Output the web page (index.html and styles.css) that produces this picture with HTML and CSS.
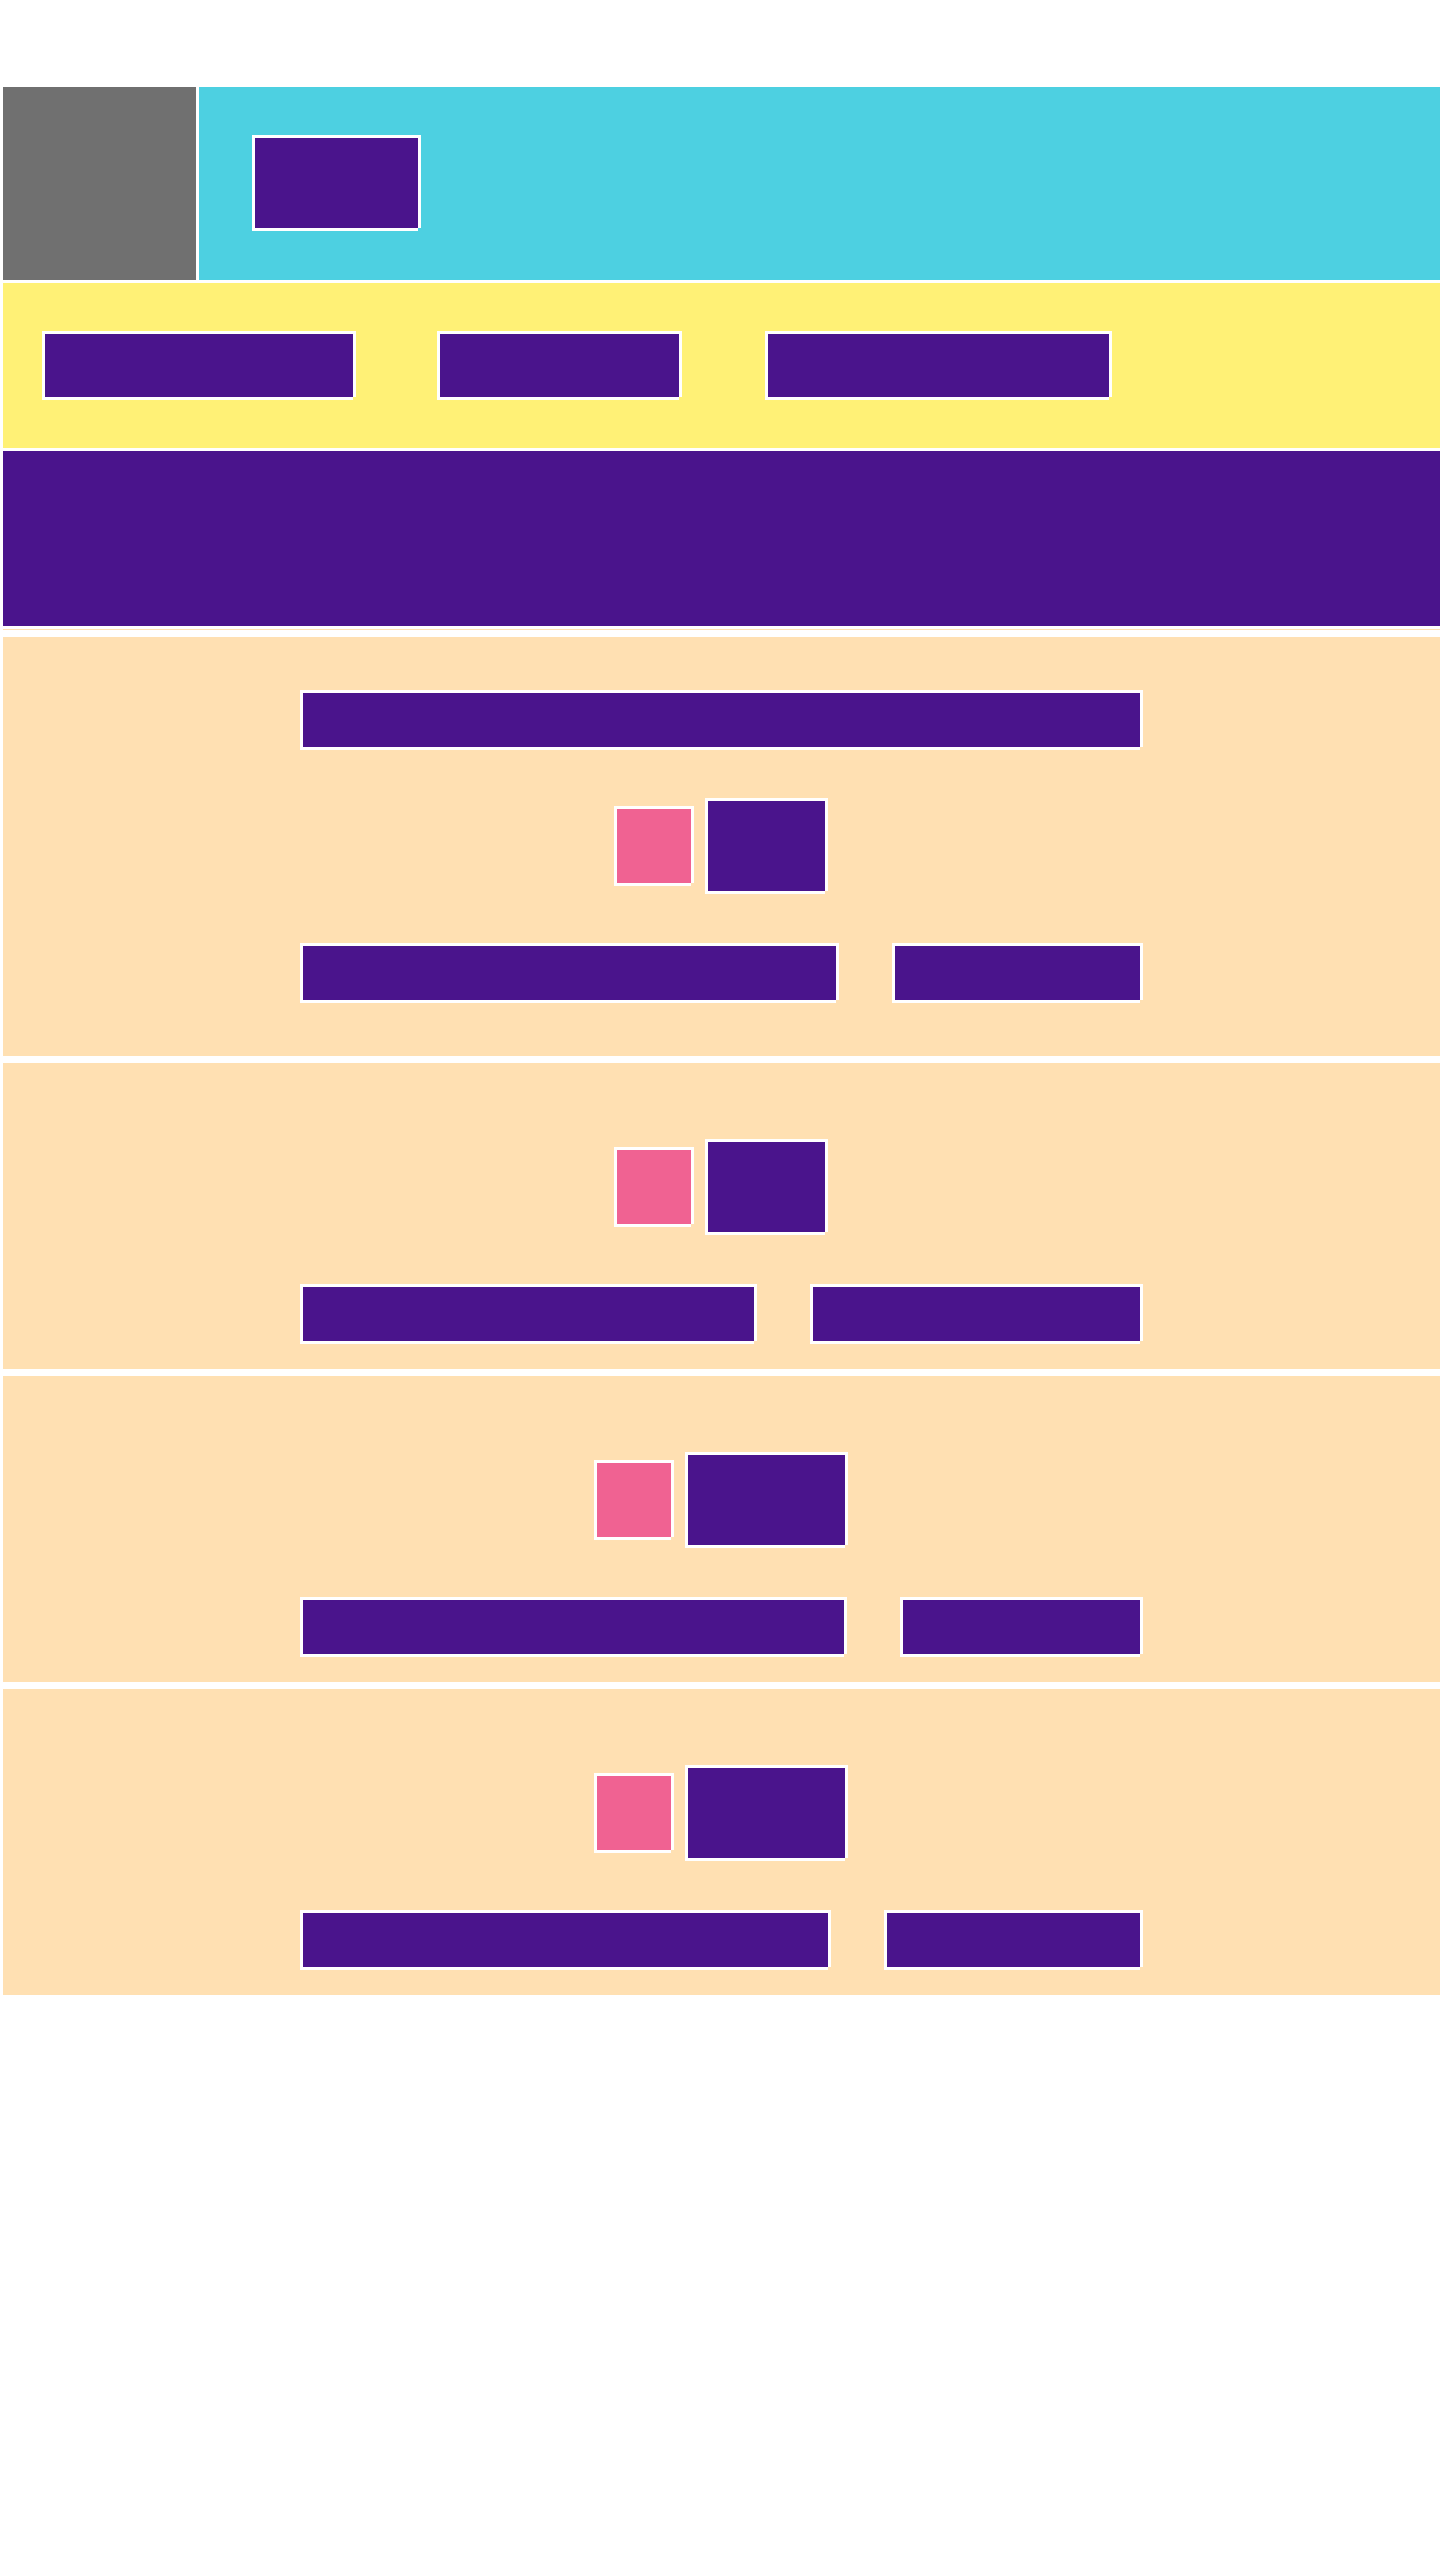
FILE: index.html
```html
<!DOCTYPE html>
<html lang="en">
<head>
    <meta charset="UTF-8">
    <meta name="viewport" content="width=device-width, initial-scale=1.0">
    <title>Layout</title>

    <link rel="stylesheet" href="styles.css">
</head>
<body>

    <div class="page">
        <header class="top">
            <div class="logo"></div>
            <div class="banner">
                <div class="blk brand"></div>
            </div>
        </header>

        <nav class="nav">
            <div class="blk nav-a"></div>
            <div class="blk nav-b"></div>
            <div class="blk nav-c"></div>
        </nav>

        <section class="hero"></section>
        <div class="rule"></div>

        <!-- first card has a title bar -->
        <section class="card first">
            <div class="col">
                <div class="blk title"></div>
                <div class="pair">
                    <div class="blk dot"></div>
                    <div class="blk tag"></div>
                </div>
                <div class="bars">
                    <div class="blk bar-536"></div>
                    <div class="blk bar-rest"></div>
                </div>
            </div>
        </section>

        <section class="card">
            <div class="col">
                <div class="pair">
                    <div class="blk dot"></div>
                    <div class="blk tag"></div>
                </div>
                <div class="bars">
                    <div class="blk bar-454"></div>
                    <div class="blk bar-rest"></div>
                </div>
            </div>
        </section>

        <section class="card">
            <div class="col">
                <div class="pair wide">
                    <div class="blk dot"></div>
                    <div class="blk tag"></div>
                </div>
                <div class="bars">
                    <div class="blk bar-544"></div>
                    <div class="blk bar-rest"></div>
                </div>
            </div>
        </section>

        <section class="card">
            <div class="col">
                <div class="pair wide">
                    <div class="blk dot"></div>
                    <div class="blk tag"></div>
                </div>
                <div class="bars">
                    <div class="blk bar-528"></div>
                    <div class="blk bar-rest"></div>
                </div>
            </div>
        </section>
    </div>

</body>
</html>
```

FILE: styles.css
```css
* {
    box-sizing: border-box;
}

body {
    font-family: "Liberation Sans", Arial, sans-serif;
    margin: 0;
    padding: 0;
    background-color: #fff;
}

.page {
    padding: 87px 0 0 3px;
}

/* purple block with the white frame (no bottom-right corner) */
.blk {
    background-color: #4a148c;
    border-top: 3px solid #fff;
    border-left: 3px solid #fff;
    box-shadow: 3px 0 0 #fff, 0 3px 0 #fff;
}

.top {
    display: flex;
    height: 193px;
}

.logo {
    width: 193px;
    margin-right: 3px;
    background-color: #707070;
}

.banner {
    flex: 1;
    background-color: #4dd0e1;
    padding: 48px 0 0 53px;
}

.brand {
    width: 166px;
    height: 93px;
}

.nav {
    display: flex;
    margin-top: 3px;
    height: 165px;
    padding: 48px 0 0 39px;
    background-color: #fff176;
}

.nav .blk {
    height: 66px;
}

.nav-a {
    width: 311px;
}

.nav-b {
    width: 242px;
    margin-left: 84px;
}

.nav-c {
    width: 344px;
    margin-left: 86px;
}

.hero {
    margin-top: 3px;
    height: 175px;
    background-color: #4a148c;
}

.rule {
    margin-top: 3px;
    height: 1px;
    background-color: #ffe0b2;
}

.card {
    margin-top: 7px;
    height: 306px;
    padding: 76px 0 0 297px;
    background-color: #ffe0b2;
}

.card.first {
    height: 419px;
    padding-top: 53px;
}

.col {
    width: 840px;
}

.title {
    height: 57px;
    margin-bottom: 51px;
}

.pair {
    display: flex;
    align-items: center;
    gap: 14px;
    margin-left: 314px;
}

.pair .dot {
    width: 77px;
    height: 77px;
    background-color: #f06292;
}

.pair .tag {
    width: 120px;
    height: 93px;
}

.pair.wide {
    margin-left: 294px;
}

.pair.wide .tag {
    width: 160px;
}

.bars {
    display: flex;
    gap: 56px;
    margin-top: 52px;
}

.bars .blk {
    height: 57px;
}

.bar-536 { width: 536px; }
.bar-454 { width: 454px; }
.bar-544 { width: 544px; }
.bar-528 { width: 528px; }

.bar-rest {
    flex: 1;
}
```
